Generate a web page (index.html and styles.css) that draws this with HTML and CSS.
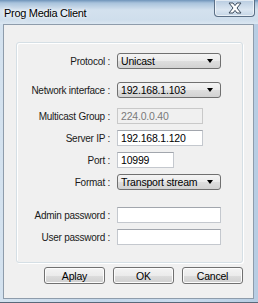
FILE: index.html
```html
<!DOCTYPE html>
<html lang="en">
<head>
	<meta charset="UTF-8">
	<title>Prog Media Client</title>
	<link rel="stylesheet" href="styles.css">
</head>
<body>
	<div class="window">
		<div class="titlebar">
			<span class="title">Prog Media Client</span>
			<div class="close">
				<svg width="16" height="12" viewBox="0 0 16 12">
					<path d="M2 1h4l2 2.6 2-2.6h4l-4 5 4 5h-4l-2-2.6-2 2.6h-4l4-5z" fill="#fff" stroke="#3b4a5c" stroke-width="1" stroke-linejoin="round"/>
				</svg>
			</div>
		</div>
		<div class="client">
			<div class="group">
				<div class="row">
					<label>Protocol :</label>
					<div class="combo"><span>Unicast</span><i class="arrow"></i></div>
				</div>
				<div class="row sep-a">
					<label>Network interface :</label>
					<div class="combo"><span>192.168.1.103</span><i class="arrow"></i></div>
				</div>
				<div class="row sep-b">
					<label>Multicast Group :</label>
					<input class="field short" type="text" value="224.0.0.40" disabled>
				</div>
				<div class="row">
					<label>Server IP :</label>
					<input class="field short" type="text" value="192.168.1.120">
				</div>
				<div class="row">
					<label>Port :</label>
					<input class="field port" type="text" value="10999">
				</div>
				<div class="row">
					<label>Format :</label>
					<div class="combo"><span>Transport stream</span><i class="arrow"></i></div>
				</div>
				<div class="row sep-c">
					<label>Admin password :</label>
					<input class="field" type="password">
				</div>
				<div class="row">
					<label>User password :</label>
					<input class="field" type="password">
				</div>
			</div>
			<div class="buttons">
				<button class="btn">Aplay</button>
				<button class="btn">OK</button>
				<button class="btn">Cancel</button>
			</div>
		</div>
	</div>
</body>
</html>
```

FILE: styles.css
```css
* {
	margin: 0;
	padding: 0;
	box-sizing: border-box;
}
body {
	font-family: "Liberation Sans", Arial, sans-serif;
	background-color: #c6d8ea;
}
.window {
	width: 258px;
	height: 303px;
	background: linear-gradient(to right, #d4e2ef, #c2d6ea 40%, #cadcee 70%, #b7cde3);
	border-bottom: 1px solid #59697a;
}
.titlebar {
	height: 24px;
	display: flex;
	justify-content: space-between;
	background: linear-gradient(to bottom, #6e93b9 0, #a9c3dc 3px, #d3e1ee 10px, #cfdeec 20px, #dbe7f2 24px);
	position: relative;
}
.title {
	padding: 7px 0 0 4px;
	font-size: 11px;
	letter-spacing: -0.3px;
	color: #000;
	text-shadow: 0 0 6px #fff, 0 0 3px #fff;
}
.close {
	width: 41px;
	height: 17px;
	margin-right: 3px;
	border: 1px solid #5b6f86;
	border-top: none;
	border-radius: 0 0 4px 4px;
	background: linear-gradient(to bottom, #b7cbe0, #dbe6f1 60%, #c4d5e6);
	box-shadow: inset 0 0 0 1px rgba(255, 255, 255, 0.6);
	display: flex;
	align-items: center;
	justify-content: center;
}
.client {
	height: 275px;
	margin: 0 4px 0 3px;
	background-color: #f0f0f0;
	border: 1px solid #8e9cab;
	display: flex;
	flex-direction: column;
}
.group {
	width: 227px;
	height: 221px;
	margin: 17px 0 0 12px;
	padding: 10px 0 0 0;
	border: 1px solid #d5dfe5;
	border-radius: 3px;
	box-shadow: inset 1px 1px 0 #fff, 1px 1px 0 #fff;
	display: flex;
	flex-direction: column;
	gap: 6px;
}
.row {
	display: flex;
	align-items: center;
	height: 16px;
}
.sep-a {
	margin-top: 7px;
}
.sep-b {
	margin-top: 4px;
}
.sep-c {
	margin-top: 11px;
}
.row label {
	width: 93px;
	margin-right: 7px;
	text-align: right;
	font-size: 10px;
	letter-spacing: -0.25px;
	color: #1a1a1a;
	white-space: nowrap;
}
.combo {
	width: 104px;
	height: 16px;
	border: 1px solid #707070;
	border-radius: 3px;
	background: linear-gradient(to bottom, #f4f4f4, #ebebeb 50%, #dedede 51%, #d2d2d2);
	display: flex;
	align-items: center;
	justify-content: space-between;
	padding: 0 7px 0 3px;
	font-size: 10.5px;
	letter-spacing: -0.2px;
	color: #000;
}
.arrow {
	width: 0;
	height: 0;
	border-left: 3.5px solid transparent;
	border-right: 3.5px solid transparent;
	border-top: 4px solid #000;
}
.field {
	width: 104px;
	height: 16px;
	border: 1px solid #c4c8ce;
	border-top-color: #a2a6ad;
	background-color: #fff;
	padding: 0 3px;
	font-family: "Liberation Sans", Arial, sans-serif;
	font-size: 10.5px;
	letter-spacing: -0.2px;
	color: #000;
	outline: none;
}
.field.short {
	width: 86px;
}
.field.port {
	width: 57px;
}
.field:disabled {
	background-color: #f0f0f0;
	border-color: #c9c9c9;
	color: #7a7a7a;
}
.buttons {
	display: flex;
	justify-content: flex-end;
	gap: 8px;
	margin: 4px 10px 0 0;
}
.btn {
	width: 61px;
	height: 17px;
	border: 1px solid #707070;
	border-radius: 3px;
	background: linear-gradient(to bottom, #f4f4f4, #ebebeb 50%, #dddddd 51%, #cfcfcf);
	box-shadow: inset 0 0 0 1px #fcfcfc;
	font-family: "Liberation Sans", Arial, sans-serif;
	font-size: 10.5px;
	letter-spacing: -0.2px;
	color: #000;
}
```
